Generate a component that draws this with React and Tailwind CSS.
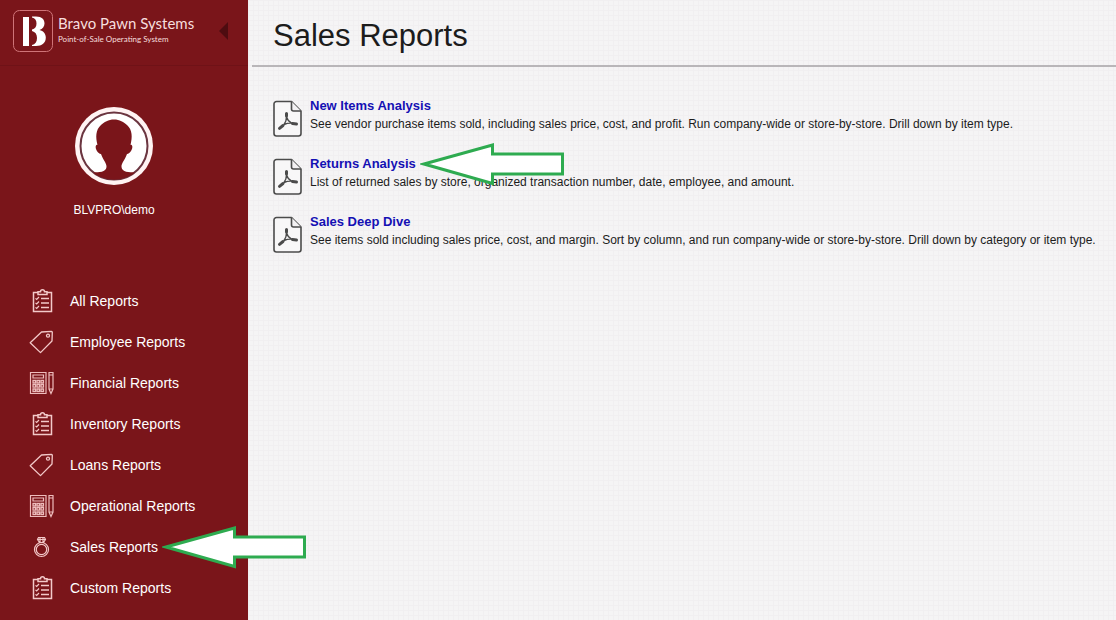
import React from "react";

const menu = [
  { label: "All Reports", icon: ClipboardIcon },
  { label: "Employee Reports", icon: TagIcon },
  { label: "Financial Reports", icon: CalculatorIcon },
  { label: "Inventory Reports", icon: ClipboardIcon },
  { label: "Loans Reports", icon: TagIcon },
  { label: "Operational Reports", icon: CalculatorIcon },
  { label: "Sales Reports", icon: RingIcon, marked: true },
  { label: "Custom Reports", icon: ClipboardIcon },
];

const reports = [
  {
    title: "New Items Analysis",
    text: "See vendor purchase items sold, including sales price, cost, and profit. Run company-wide or store-by-store. Drill down by item type.",
  },
  {
    title: "Returns Analysis",
    text: "List of returned sales by store, organized transaction number, date, employee, and amount.",
    marked: true,
  },
  {
    title: "Sales Deep Dive",
    text: "See items sold including sales price, cost, and margin. Sort by column, and run company-wide or store-by-store. Drill down by category or item type.",
  },
];

function ClipboardIcon() {
  return (
    <svg viewBox="0 0 26 26" className="w-[26px] h-[26px]" fill="none" stroke="#f3c9c9" strokeWidth="1.5">
      <path d="M9 4.500H4.500V23.500h18V4.500H18" />
      <path d="M9 6.500V3.800h2.500a2 2 0 0 1 4 0H18v2.700z" />
      <path d="M12 10.500h8M12 15h8M12 19.500h8" />
      <path d="M6.500 10.300l1.200 1.200L10 9M6.500 14.800l1.200 1.200 2.300-2.500M6.500 19.300l1.200 1.200L10 18" strokeWidth="1.200" />
    </svg>
  );
}

function TagIcon() {
  return (
    <svg viewBox="0 0 26 26" className="w-[26px] h-[26px]" fill="none" stroke="#f3c9c9" strokeWidth="1.3" strokeLinejoin="round">
      <path d="M12.500 3l10-.6a.8.800 0 0 1 .8.800L23 12 11.500 23.600 1.200 13.800z" />
      <circle cx="19" cy="6.700" r="1.500" />
    </svg>
  );
}

function CalculatorIcon() {
  return (
    <svg viewBox="0 0 26 26" className="w-[26px] h-[26px]" fill="none" stroke="#eebcbc" strokeWidth="1.200">
      <path d="M1.500 2.500h15.500v21H1.500z" />
      <path d="M4 5h10.500v3H4z" />
      <g strokeWidth="1.300">
        <path d="M4 10.500h2.500V13H4zM8 10.500h2.500V13H8zM12 10.500h2.500V13H12z" />
        <path d="M4 14.700h2.500v2.500H4zM8 14.700h2.500v2.500H8zM12 14.700h2.500v2.500H12z" />
        <path d="M4 19h2.500v2.500H4zM8 19h2.500v2.500H8zM12 19h2.500v2.500H12z" />
      </g>
      <path d="M20 2.500h4V19l-2 4.500-2-4.500zM20 5h4M20 19h4" />
    </svg>
  );
}

function RingIcon() {
  return (
    <svg viewBox="0 0 26 26" className="w-[26px] h-[26px]" fill="none" stroke="#f3c9c9" strokeWidth="1.200">
      <circle cx="12.500" cy="15.500" r="7" />
      <circle cx="12.500" cy="15.500" r="5.200" />
      <path d="M9.500 3.500h6l1 2-2 3h-4l-2-3zM8.500 5.500h8M11 3.500v5M14 3.500v5" />
    </svg>
  );
}

function PdfIcon() {
  return (
    <svg viewBox="0 0 30 38" className="w-[30px] h-[38px] shrink-0" fill="none" stroke="#4b4b4b" strokeWidth="1.600" strokeLinejoin="round">
      <path d="M3.500 1.500h15l9.500 9.500v22.500a2.500 2.500 0 0 1-2.500 2.500h-22A2.500 2.500 0 0 1 1 33.500V4a2.500 2.500 0 0 1 2.500-2.500z" fill="#f8f7f8" />
      <path d="M18.500 1.500V9a2 2 0 0 0 2 2H28" fill="#f3f1f3" />
      <path d="M13.500 17c0 3-1 5.500-2.500 7.500 2.500-1 5-1.500 7.500-1.300-2.500-1.500-4.200-3.500-5-6.200z" strokeWidth="1.400" />
      <path d="M13.500 16V13.500M10 25.500L6.500 28.300M19.500 23.400l4 .6" strokeWidth="3" strokeLinecap="round" />
    </svg>
  );
}

function Avatar() {
  return (
    <svg viewBox="0 0 80 80" className="w-20 h-20" role="img" aria-label="User">
      <circle cx="40" cy="40" r="39" fill="#fff3f3" />
      <circle cx="40" cy="40" r="33.500" fill="#fff" stroke="#6b3540" strokeWidth="2" />
      <path
        d="M19 66.500C25 66 32 66.500 32.500 61C32.800 57 29 54 27 48C24 48 20.500 42 22 39.500C22.500 38.600 23.200 38.800 23.500 39C21.500 31 21.500 24 27 19C30 16 34.500 13.500 40 13.500C45.500 13.500 50 16 53 19C58.500 24 58.500 31 56.500 39C57 38.600 57.700 38.600 58 39.500C59.500 42 56 48 53 48C51 54 47.200 57 47.500 61C48 66.500 55 66 61 66.500C50 76 30 76 19 66.500Z"
        fill="#7a151a"
      />
    </svg>
  );
}

function Logo() {
  return (
    <svg viewBox="0 0 42 44" className="w-[42px] h-11" aria-hidden="true">
      <rect x="1.500" y="1.500" width="39" height="41" rx="6" fill="none" stroke="#cf7478" />
      <g fill="#fff">
        <rect x="11" y="8" width="6" height="29" />
        <path d="M20 7.500h4c6 0 8.500 3 8.500 7 0 3-1.800 5.300-5 6.500 4 1 6.300 3.800 6.300 7.500 0 5.500-3.800 8.500-9.800 8.500h-4v-1c3.200-.8 5-3 5-7 0-3.800-1.800-6.200-5-7v-1.500c3-.6 4.500-2.600 4.500-6s-1.500-5.400-4.500-6z" />
      </g>
    </svg>
  );
}

function Arrow() {
  return (
    <svg viewBox="0 0 144 44" className="absolute left-full top-1/2 -translate-y-1/2 z-10 ml-1 w-36 h-11 pointer-events-none" aria-hidden="true">
      <path d="M4 22L72.500 3V12h70v20h-70v9.500z" fill="#fff" stroke="#2eab50" strokeWidth="3" />
    </svg>
  );
}

export default function App() {
  return (
    <div className="flex min-h-screen font-['Liberation_Sans',Arial,sans-serif] bg-[#f5f4f5]">
      <aside className="w-[248px] shrink-0 bg-[#7a151a] text-white">
        <header className="flex items-center h-[66px] pl-3 pr-5 pb-1 border-b border-[#6f1217]">
          <Logo />
          <div className="ml-1 flex-1 font-[Lato,sans-serif] text-[#f6dede] whitespace-nowrap">
            <p className="text-[15px] leading-4">Bravo Pawn Systems</p>
            <p className="text-[8px] leading-4">Point-of-Sale Operating System</p>
          </div>
          <button aria-label="Collapse menu" className="shrink-0">
            <svg viewBox="0 0 9 18" className="w-[9px] h-[18px]">
              <path d="M9 0v18L0 9z" fill="#4e0c10" />
            </svg>
          </button>
        </header>

        <div className="flex flex-col items-center pt-10 pr-5">
          <Avatar />
          <p className="mt-3.5 text-[12px] leading-5">BLVPRO\demo</p>
        </div>

        <nav className="mt-15">
          <ul>
            {menu.map((item) => (
              <li key={item.label} className="flex items-center h-[41px] pl-[29px]">
                <item.icon />
                <a href="#" className="relative ml-[15px] text-[14px] leading-5 whitespace-nowrap">
                  {item.label}
                  {item.marked && <Arrow />}
                </a>
              </li>
            ))}
          </ul>
        </nav>
      </aside>

      <main className="flex-1 min-w-0 pl-1 bg-[linear-gradient(#f1eff1_1px,transparent_1px),linear-gradient(90deg,#f1eff1_1px,transparent_1px)] bg-[size:5px_5px]">
        <h1 className="h-[67px] pl-[21px] pt-4 border-b-2 border-[#b9b6b9] text-[31px] leading-10 text-[#1c1c1c]">Sales Reports</h1>
        <ul className="pt-[29px] pl-[21px]">
          {reports.map((report) => (
            <li key={report.title} className="flex items-start h-[58px]">
              <div className="pt-1">
                <PdfIcon />
              </div>
              <div className="ml-[7px] whitespace-nowrap">
                <a href="#" className="relative block w-fit text-[13px] leading-5 font-bold text-[#1410b4]">
                  {report.title}
                  {report.marked && <Arrow />}
                </a>
                <p className="text-[12px] leading-4 text-[#1c1c1c]">{report.text}</p>
              </div>
            </li>
          ))}
        </ul>
      </main>
    </div>
  );
}
